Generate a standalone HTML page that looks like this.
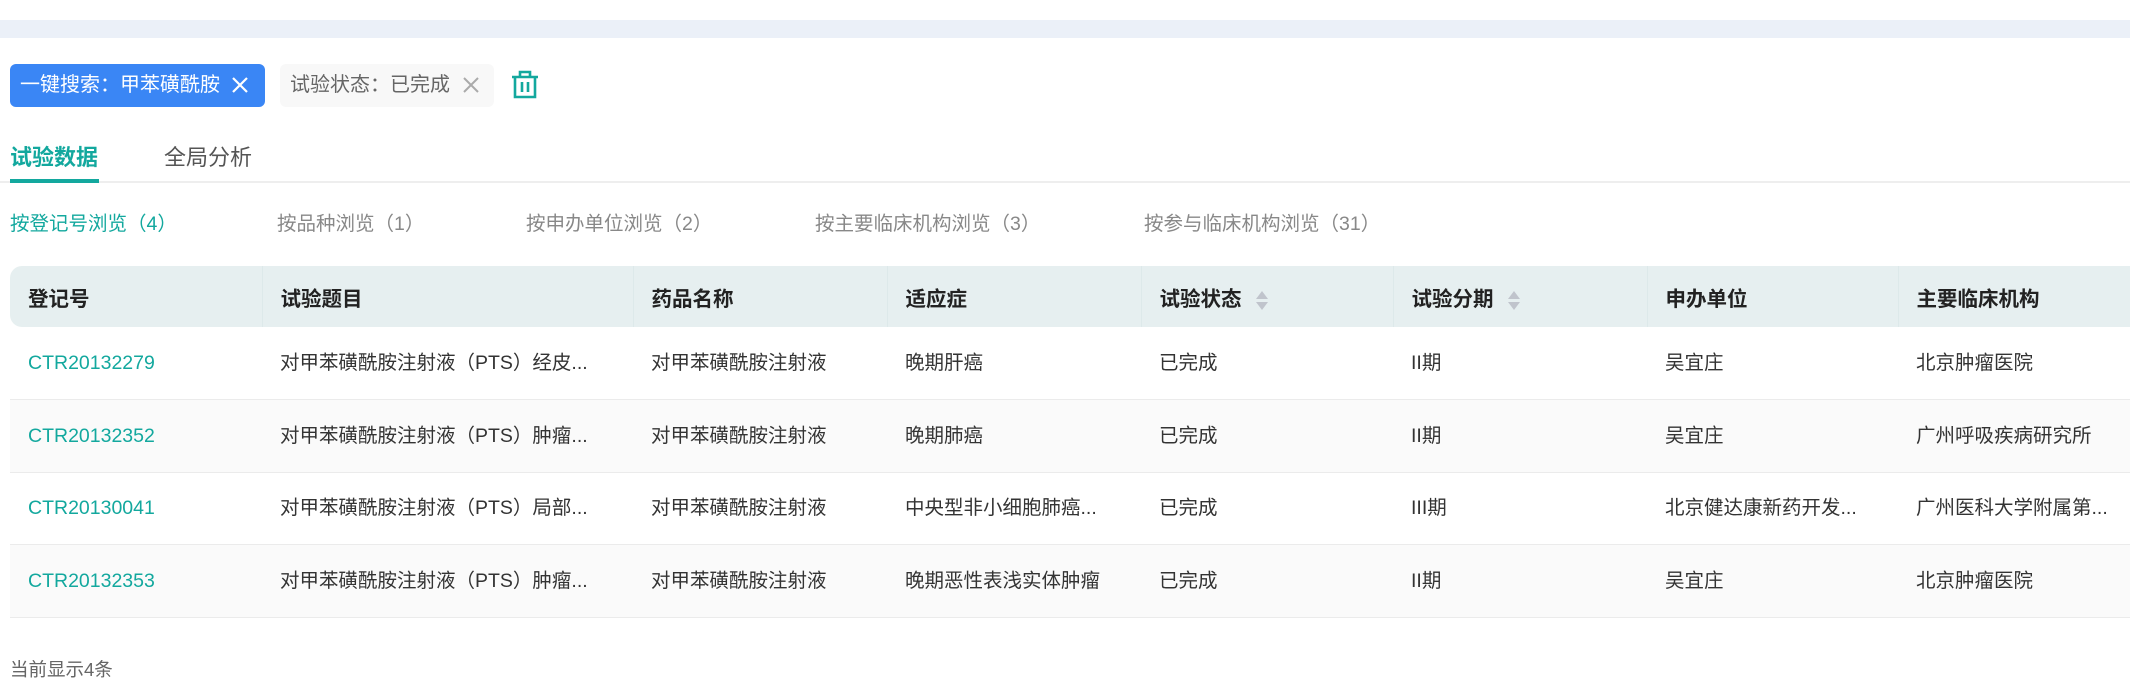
<!DOCTYPE html>
<html><head><meta charset="utf-8"><style>
*{margin:0;padding:0;box-sizing:border-box}
body{width:2130px;height:688px;background:#fff;font-family:"Liberation Sans","Noto Sans CJK SC",sans-serif;color:#333;position:relative;overflow:hidden}
.band{position:absolute;left:0;top:20px;width:2130px;height:18px;background:#ebf0f8}
.tag{position:absolute;top:64px;height:43px;border-radius:6px;font-size:20px;line-height:43px;padding-left:10px}
.t1{left:10px;width:255px;background:#3a86f5;color:#fff}
.t2{left:280px;width:214px;background:#f8f8f8;color:#666}
.x{position:absolute;top:12px;width:18px;height:18px}
.tabs{position:absolute;left:0;top:134px;width:2130px;height:49px;border-bottom:2px solid #eee}
.tab{position:absolute;top:6px;font-size:22px}
.sub{position:absolute;top:207px;font-size:19.5px;color:#888}
table{position:absolute;left:10px;top:266px;width:2140px;border-collapse:collapse;font-size:19.5px}
th{background:#e6eff0;height:61px;text-align:left;font-weight:bold;font-size:20.5px;color:#222;padding-left:18px;border-left:1px solid #dde9ea}
th:first-child{border-left:none;border-top-left-radius:12px;border-bottom-left-radius:12px}
td{height:72.5px;padding-left:18px;border-bottom:1px solid #ebebeb;color:#333;white-space:nowrap;vertical-align:middle}
td span{display:inline-block;line-height:26px;vertical-align:middle}
tr.g td{background:#fafafa}
td.id{color:#13a89e}
.sort{display:inline-block;vertical-align:middle;margin-left:14px;width:12px;height:22px;position:relative}
.sort:before{content:"";position:absolute;top:2px;left:0;border:6px solid transparent;border-bottom:8px solid #c0c4cc;border-top:0}
.sort:after{content:"";position:absolute;top:13px;left:0;border:6px solid transparent;border-top:8px solid #c0c4cc;border-bottom:0}
.foot{position:absolute;left:10px;top:656px;font-size:18.5px;color:#666}
</style></head><body>
<div class="band"></div>
<div class="tag t1">一键搜索：甲苯磺酰胺<svg class="x" style="left:221px" viewBox="0 0 18 18"><path d="M2 2L16 16M16 2L2 16" stroke="#fff" stroke-width="2.2"/></svg></div>
<div class="tag t2">试验状态：已完成<svg class="x" style="left:182px" viewBox="0 0 18 18"><path d="M2 2L16 16M16 2L2 16" stroke="#aaa" stroke-width="2"/></svg></div>
<svg style="position:absolute;left:511px;top:70px" width="28" height="30" viewBox="0 0 28 30" fill="none" stroke="#13a89e" stroke-width="2.6"><path d="M1 7H27M9 7V2H19V7M4 7V27H24V7M11 12V22M17 12V22"/></svg>
<div class="tabs">
<div class="tab" style="left:10px;color:#13a89e;font-weight:bold">试验数据</div>
<div style="position:absolute;left:10px;top:45px;width:89px;height:4px;background:#13a89e"></div>
<div class="tab" style="left:164px;color:#555">全局分析</div>
</div>
<div class="sub" style="left:10px;color:#13a89e">按登记号浏览（4）</div>
<div class="sub" style="left:277px">按品种浏览（1）</div>
<div class="sub" style="left:526px">按申办单位浏览（2）</div>
<div class="sub" style="left:815px">按主要临床机构浏览（3）</div>
<div class="sub" style="left:1144px">按参与临床机构浏览（31）</div>
<table>
<colgroup><col style="width:252px"><col style="width:371px"><col style="width:254px"><col style="width:254px"><col style="width:252px"><col style="width:254px"><col style="width:251px"><col style="width:252px"></colgroup>
<tr><th>登记号</th><th>试验题目</th><th>药品名称</th><th>适应症</th><th>试验状态<span class="sort"></span></th><th>试验分期<span class="sort"></span></th><th>申办单位</th><th>主要临床机构</th></tr>
<tr><td class="id"><span>CTR20132279</span></td><td><span>对甲苯磺酰胺注射液（PTS）经皮...</span></td><td><span>对甲苯磺酰胺注射液</span></td><td><span>晚期肝癌</span></td><td><span>已完成</span></td><td><span>II期</span></td><td><span>吴宜庄</span></td><td><span>北京肿瘤医院</span></td></tr>
<tr class="g"><td class="id"><span>CTR20132352</span></td><td><span>对甲苯磺酰胺注射液（PTS）肿瘤...</span></td><td><span>对甲苯磺酰胺注射液</span></td><td><span>晚期肺癌</span></td><td><span>已完成</span></td><td><span>II期</span></td><td><span>吴宜庄</span></td><td><span>广州呼吸疾病研究所</span></td></tr>
<tr><td class="id"><span>CTR20130041</span></td><td><span>对甲苯磺酰胺注射液（PTS）局部...</span></td><td><span>对甲苯磺酰胺注射液</span></td><td><span>中央型非小细胞肺癌...</span></td><td><span>已完成</span></td><td><span>III期</span></td><td><span>北京健达康新药开发...</span></td><td><span>广州医科大学附属第...</span></td></tr>
<tr class="g"><td class="id"><span>CTR20132353</span></td><td><span>对甲苯磺酰胺注射液（PTS）肿瘤...</span></td><td><span>对甲苯磺酰胺注射液</span></td><td><span>晚期恶性表浅实体肿瘤</span></td><td><span>已完成</span></td><td><span>II期</span></td><td><span>吴宜庄</span></td><td><span>北京肿瘤医院</span></td></tr>
</table>
<div class="foot">当前显示4条</div>
</body></html>
